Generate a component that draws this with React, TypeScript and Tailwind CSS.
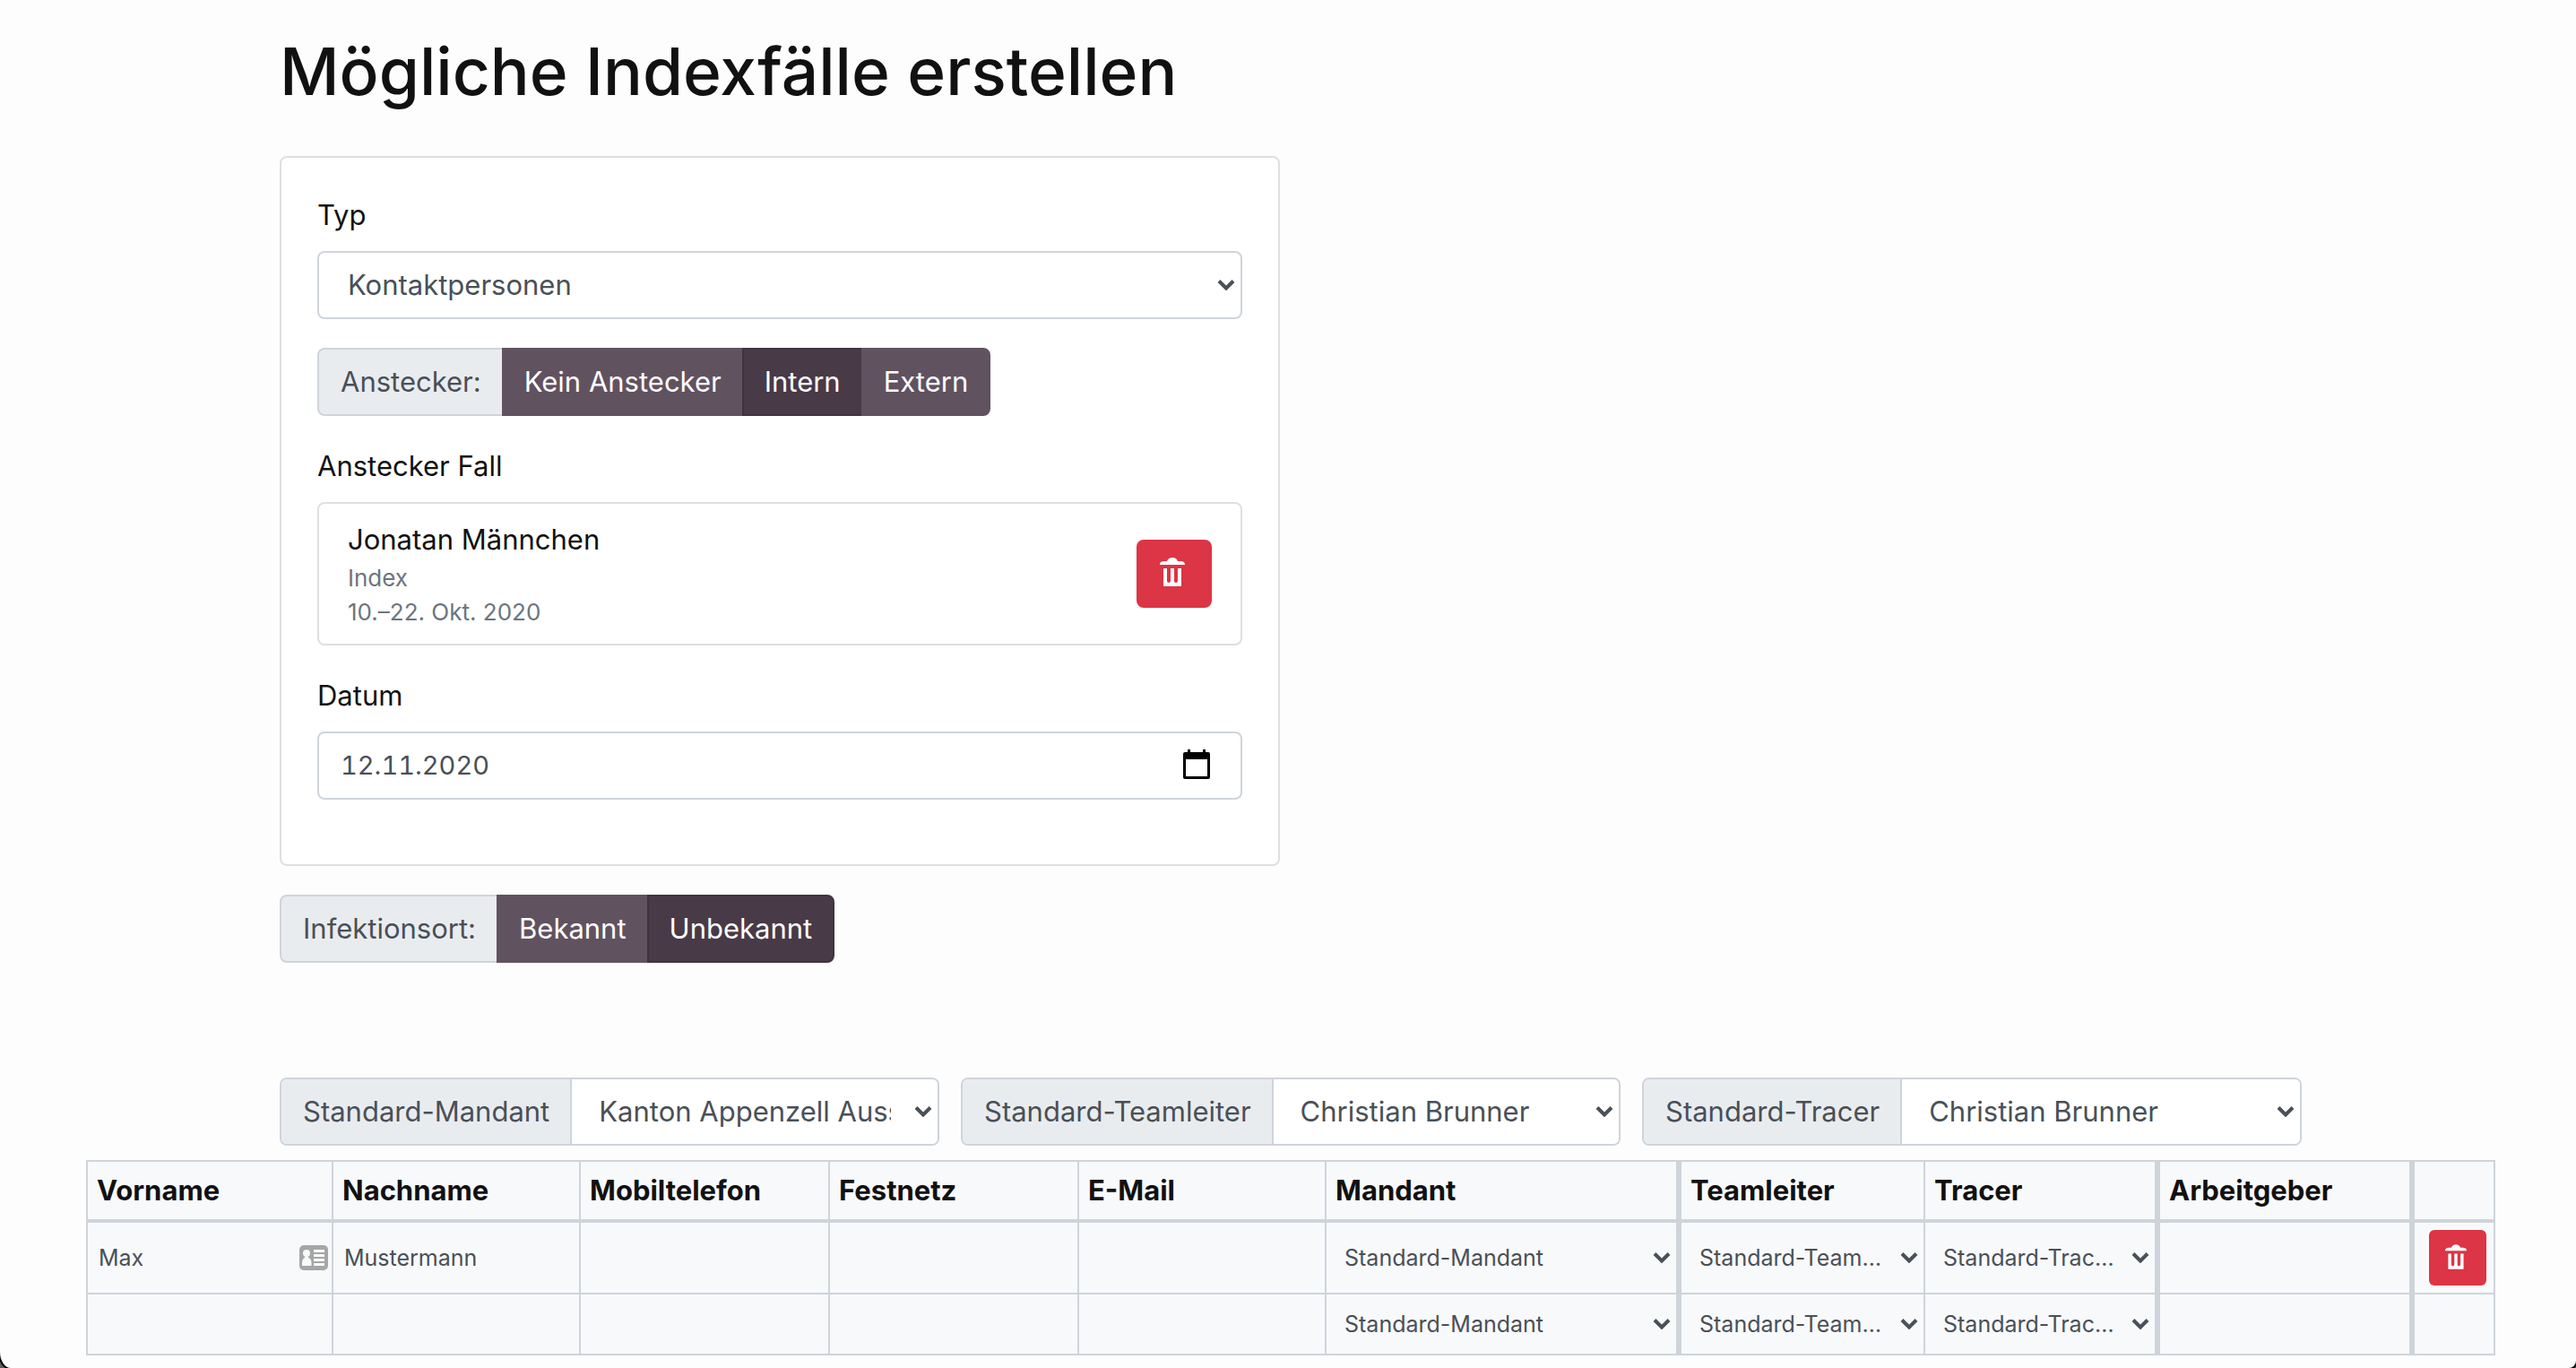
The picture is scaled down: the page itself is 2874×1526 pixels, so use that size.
import { useId } from "react";
import type { ReactNode } from "react";

function Chevron({ className }: { className: string }) {
  return (
    <svg viewBox="0 0 20 12" aria-hidden="true" className={"pointer-events-none absolute top-1/2 h-3 w-5 -translate-y-1/2 " + className}>
      <path d="M2 1.500 L10 9.500 L18 1.500" fill="none" stroke="#495057" strokeWidth="4" />
    </svg>
  );
}

function TrashIcon({ className }: { className: string }) {
  return (
    <svg viewBox="0 0 28 32" aria-hidden="true" fill="currentColor" className={className}>
      <path d="M0 8 C0 5 2 4 5 4 L8 4 C9 1.500 11 0 14 0 C17 0 19 1.500 20 4 L23 4 C26 4 28 5 28 8 Z" />
      <path d="M4 12 H8 V26 A2 2 0 0 0 12 26 V12 H16 V26 A2 2 0 0 0 20 26 V12 H24 V32 H4 Z" />
    </svg>
  );
}

function CalendarIcon() {
  return (
    <svg viewBox="0 0 30 33" aria-hidden="true" className="h-[33px] w-[30px]">
      <path fillRule="evenodd" d="M5 0 H8 V3 H22 V0 H25 V3 H28 Q30 3 30 5 V31 Q30 33 28 33 H2 Q0 33 0 31 V5 Q0 3 2 3 H5 Z M3 11 V30 H27 V11 Z" fill="#000" />
    </svg>
  );
}

function ContactIcon() {
  return (
    <svg viewBox="0 0 32 28" aria-hidden="true" className="h-7 w-8 shrink-0">
      <rect width="32" height="28" rx="5" fill="#a6a6a6" />
      <circle cx="8" cy="9" r="4" fill="#f8f9fb" />
      <path d="M3 23 V20 Q3 15 6 14 L6.500 11 H9.500 L10 14 Q13.500 15 13.500 20 V23 Z" fill="#f8f9fb" />
      <path d="M16 5 H28 V8 H16 Z M16 10 H28 V13 H16 Z M16 15 H28 V18 H16 Z M16 20 H28 V23 H16 Z" fill="#f8f9fb" />
    </svg>
  );
}

function Choice({ active, children }: { active?: boolean; children: ReactNode }) {
  return (
    <button
      type="button"
      aria-pressed={!!active}
      className={
        "-ml-0.5 border-2 px-[23px] leading-12 text-white last:rounded-r-lg " +
        (active ? "border-[#40333e] bg-[#483a46]" : "border-[#61525f] bg-[#61525f]")
      }
    >
      {children}
    </button>
  );
}

function ChoiceGroup({ label, children }: { label: string; children: ReactNode }) {
  return (
    <div role="group" aria-label={label} className="flex h-[76px] items-stretch">
      <span className="flex items-center rounded-l-lg border-2 border-[#ced4da] bg-[#e9ecef] pr-[23px] pl-6 text-[#495057]">
        {label}
      </span>
      {children}
    </div>
  );
}

function DefaultSelect({ label, value }: { label: string; value: string }) {
  const id = useId();
  return (
    <div className="flex h-[76px] min-w-0 flex-1 rounded-lg border-2 border-[#ced4da] bg-white">
      <label htmlFor={id} className="flex shrink-0 items-center rounded-l-md border-r-2 border-[#ced4da] bg-[#e9ecef] pr-[23px] pl-6 text-[#495057]">
        {label}
      </label>
      <div className="relative min-w-0 flex-1">
        <select id={id} className="h-full w-full appearance-none rounded-r-md bg-white pr-[52px] pl-[30px] text-[#495057]">
          <option>{value}</option>
        </select>
        <Chevron className="right-1.5" />
      </div>
    </div>
  );
}

function CellSelect({ label, value }: { label: string; value: string }) {
  return (
    <div className="relative">
      <select aria-label={label} className="h-[66px] w-full appearance-none bg-transparent pr-11 pl-5 text-[25px] text-ellipsis text-[#495057]">
        <option>{value}</option>
      </select>
      <Chevron className="right-1.5" />
    </div>
  );
}

function CellInput({ label, value }: { label: string; value?: string }) {
  return (
    <input type="text" aria-label={label} defaultValue={value} className="h-[66px] w-full min-w-0 bg-transparent px-3 text-[25px] text-[#495057]" />
  );
}

const columns = [
  { name: "Vorname", width: "w-[274px]", thick: false },
  { name: "Nachname", width: "w-[276px]", thick: false },
  { name: "Mobiltelefon", width: "w-[278px]", thick: false },
  { name: "Festnetz", width: "w-[278px]", thick: false },
  { name: "E-Mail", width: "w-[276px]", thick: false },
  { name: "Mandant", width: "w-[396px]", thick: true },
  { name: "Teamleiter", width: "w-[272px]", thick: false },
  { name: "Tracer", width: "w-[262px]", thick: true },
  { name: "Arbeitgeber", width: "w-[284px]", thick: true },
  { name: "", width: "w-[90px]", thick: false },
];

const people = [
  { Vorname: "Max", Nachname: "Mustermann" },
  { Vorname: "", Nachname: "" },
];

const defaults: Record<string, string> = {
  Mandant: "Standard-Mandant",
  Teamleiter: "Standard-Teamleiter",
  Tracer: "Standard-Tracer",
};

function PersonTable() {
  return (
    <table className="w-full table-fixed border-separate border-spacing-0 border-t-2 border-l-2 border-[#ced4da] bg-[#f8f9fb]">
      <thead>
        <tr>
          {columns.map((c) => (
            <th
              key={c.name}
              scope="col"
              className={c.width + " h-[68px] border-b-4 border-[#ced4da] px-[10px] py-2 text-left leading-12 font-bold " + (c.thick ? "border-r-6" : "border-r-2")}
            >
              {c.name}
            </th>
          ))}
        </tr>
      </thead>
      <tbody>
        {people.map((p, row) => (
          <tr key={row} className={row === 0 ? "h-20" : "h-[68px]"}>
            {columns.map((c) => (
              <td key={c.name} className={"border-b-2 border-[#ced4da] p-0 align-middle " + (c.thick ? "border-r-6" : "border-r-2")}>
                {c.name === "Vorname" && (
                  <div className="flex items-center pr-1">
                    <CellInput label="Vorname" value={p.Vorname} />
                    {row === 0 && <ContactIcon />}
                  </div>
                )}
                {c.name === "Nachname" && <CellInput label="Nachname" value={p.Nachname} />}
                {c.name in defaults && <CellSelect label={c.name} value={defaults[c.name]} />}
                {["Mobiltelefon", "Festnetz", "E-Mail", "Arbeitgeber"].includes(c.name) && <CellInput label={c.name} />}
                {c.name === "" && row === 0 && (
                  <div className="flex justify-end pr-2">
                    <button type="button" aria-label="Zeile löschen" className="flex h-[62px] w-16 items-center justify-center rounded-md bg-[#dc3545] pr-1 pb-0.5 text-white">
                      <TrashIcon className="h-7 w-6" />
                    </button>
                  </div>
                )}
              </td>
            ))}
          </tr>
        ))}
      </tbody>
    </table>
  );
}

export default function App() {
  return (
    <div className="min-h-screen overflow-hidden bg-[#5d5d5d]">
      <main className="min-h-screen rounded-br-[8px] rounded-bl-[12px_18px] bg-[#fdfdfd] pl-[6px] font-['Inter',sans-serif] text-[31px] leading-12 text-[#111] shadow-[0_0_0_2px_#000]">
        <div className="mx-auto max-w-[2256px] pt-8">
          <h1 className="text-[73px] leading-24 font-medium">Mögliche Indexfälle erstellen</h1>

          <section className="mt-[46px] flex w-[1116px] max-w-full flex-col gap-8 rounded-lg border-2 border-[#dfdfdf] bg-white px-10 pt-10 pb-[72px]">
            <div className="flex flex-col gap-4">
              <label htmlFor="typ">Typ</label>
              <div className="relative">
                <select id="typ" className="block h-[76px] w-full appearance-none rounded-lg border-2 border-[#ced4da] bg-white pr-14 pl-8 text-[#495057]">
                  <option>Kontaktpersonen</option>
                </select>
                <Chevron className="right-2" />
              </div>
            </div>

            <ChoiceGroup label="Anstecker:">
              <Choice>Kein Anstecker</Choice>
              <Choice active>Intern</Choice>
              <Choice>Extern</Choice>
            </ChoiceGroup>

            <div className="flex flex-col gap-4">
              <h2>Anstecker Fall</h2>
              <div className="flex h-40 items-center justify-between rounded-lg border-2 border-[#dfdfdf] px-8">
                <div>
                  <p className="leading-12">Jonatan Männchen</p>
                  <p className="text-[26px] leading-[38px] text-[#6c757d]">Index</p>
                  <p className="text-[26px] leading-[38px] text-[#6c757d]">10.–22. Okt. 2020</p>
                </div>
                <button type="button" aria-label="Anstecker Fall entfernen" className="flex h-[76px] w-[84px] items-center justify-center rounded-lg bg-[#dc3545] pr-1 pb-1 text-white">
                  <TrashIcon className="h-8 w-7" />
                </button>
              </div>
            </div>

            <div className="flex flex-col gap-4">
              <label htmlFor="datum">Datum</label>
              <div className="flex h-[76px] items-center rounded-lg border-2 border-[#ced4da] bg-white pr-[34px] pl-6">
                <input id="datum" type="text" defaultValue="12.11.2020" className="min-w-0 flex-1 bg-transparent text-[29px] text-[#495057] tabular-nums" />
                <button type="button" aria-label="Kalender öffnen" className="pb-1">
                  <CalendarIcon />
                </button>
              </div>
            </div>
          </section>

          <div className="mt-8">
            <ChoiceGroup label="Infektionsort:">
              <Choice>Bekannt</Choice>
              <Choice active>Unbekannt</Choice>
            </ChoiceGroup>
          </div>

          <div className="mt-32 flex gap-6">
            <DefaultSelect label="Standard-Mandant" value="Kanton Appenzell Ausserrhoden" />
            <DefaultSelect label="Standard-Teamleiter" value="Christian Brunner" />
            <DefaultSelect label="Standard-Tracer" value="Christian Brunner" />
          </div>
        </div>

        <div className="mt-4 px-[90px]">
          <PersonTable />
        </div>
      </main>
    </div>
  );
}
